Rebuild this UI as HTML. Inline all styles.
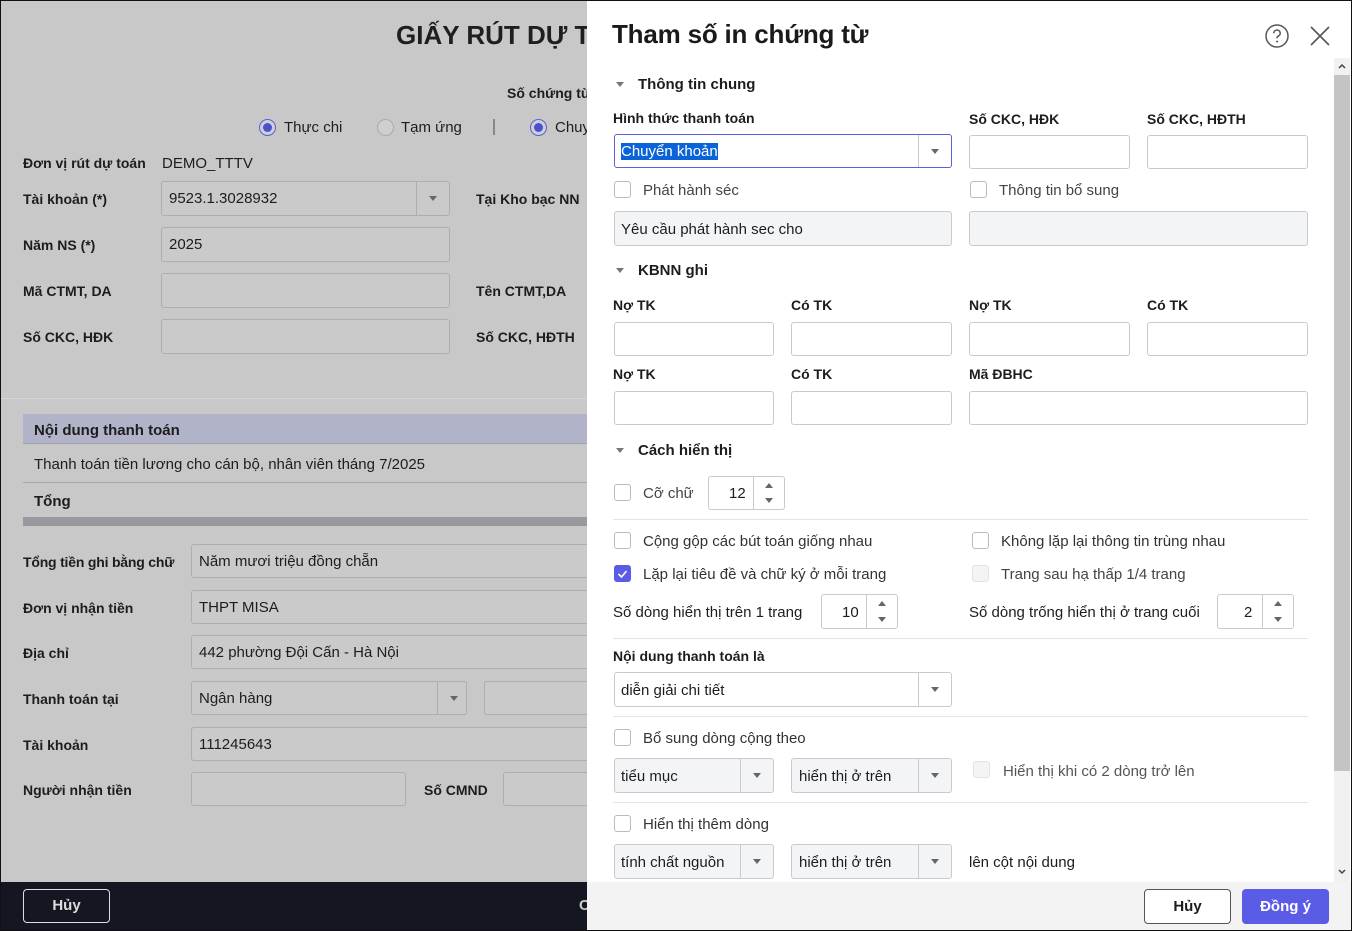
<!DOCTYPE html>
<html><head><meta charset="utf-8"><style>
*{box-sizing:border-box;margin:0;padding:0}
body{width:1352px;height:931px;overflow:hidden;position:relative;font-family:"Liberation Sans",sans-serif;font-size:14px;color:#1d1d1d;background:#c8c8c9}
.a{position:absolute;white-space:nowrap}
.b{font-weight:bold}
.li{position:absolute;border:1px solid #adaeb1;border-radius:3px;background:#cacacb}
.in{position:absolute;border:1px solid #c9cad0;border-radius:3px;background:#fff}
.g{background:#f3f4f6}
.dd{position:absolute;right:0;top:0;bottom:0;width:33px;border-left:1px solid #c9cad0}
.dd:after{content:"";position:absolute;left:12px;top:14px;border-left:4px solid transparent;border-right:4px solid transparent;border-top:5px solid #666}
.cb{position:absolute;width:17px;height:17px;border:1px solid #b9bac2;border-radius:3px;background:#fff}
.tri{position:absolute;border-left:4px solid transparent;border-right:4px solid transparent;border-top:5px solid #777}
.hr{position:absolute;left:613px;width:695px;height:1px;background:#e4e4e8}
.sp{position:absolute;border:1px solid #c9cad0;border-radius:3px;background:#fff}
.sp .s{position:absolute;right:0;top:0;bottom:0;width:31px;border-left:1px solid #c9cad0}
.sp .s:before{content:"";position:absolute;left:11px;top:6px;border-left:4px solid transparent;border-right:4px solid transparent;border-bottom:5px solid #666}
.sp .s:after{content:"";position:absolute;left:11px;bottom:6px;border-left:4px solid transparent;border-right:4px solid transparent;border-top:5px solid #666}
</style></head><body>
<div class="a" style="left:396px;top:20px;font-size:26px;font-weight:bold;color:#1f1f1f">GIẤY RÚT DỰ TOÁN</div>
<div class="a b" style="left:507px;top:85px">Số chứng từ</div>
<div class="a" style="left:259px;top:119px;width:17px;height:17px;border:1px solid #5b5fd6;border-radius:50%;background:#d0d0d4"><div style="margin:3px;width:9px;height:9px;border-radius:50%;background:#4b50d0"></div></div>
<div class="a" style="left:284px;top:119px;font-size:15px">Thực chi</div>
<div class="a" style="left:377px;top:119px;width:17px;height:17px;border:1px solid #aaa;border-radius:50%;background:#cfcfd0"></div>
<div class="a" style="left:401px;top:119px;font-size:15px">Tạm ứng</div>
<div class="a" style="left:493px;top:119px;width:2px;height:16px;background:#888"></div>
<div class="a" style="left:530px;top:119px;width:17px;height:17px;border:1px solid #5b5fd6;border-radius:50%;background:#d0d0d4"><div style="margin:3px;width:9px;height:9px;border-radius:50%;background:#4b50d0"></div></div>
<div class="a" style="left:555px;top:119px;font-size:15px">Chuyển khoản</div>
<div class="a b" style="left:23px;top:155px">Đơn vị rút dự toán</div>
<div class="a" style="left:162px;top:155px;font-size:15px">DEMO_TTTV</div>
<div class="a b" style="left:23px;top:191px">Tài khoản (*)</div>
<div class="li" style="left:161px;top:181px;width:289px;height:35px"><span class="a" style="left:7px;top:8px;font-size:15px">9523.1.3028932</span><div class="dd" style="border-color:#adaeb1"></div></div>
<div class="a b" style="left:476px;top:191px">Tại Kho bạc NN</div>
<div class="a b" style="left:23px;top:237px">Năm NS (*)</div>
<div class="li" style="left:161px;top:227px;width:289px;height:35px"><span class="a" style="left:7px;top:8px;font-size:15px">2025</span></div>
<div class="a b" style="left:23px;top:283px">Mã CTMT, DA</div>
<div class="li" style="left:161px;top:273px;width:289px;height:35px"></div>
<div class="a b" style="left:476px;top:283px">Tên CTMT,DA</div>
<div class="a b" style="left:23px;top:329px">Số CKC, HĐK</div>
<div class="li" style="left:161px;top:319px;width:289px;height:35px"></div>
<div class="a b" style="left:476px;top:329px">Số CKC, HĐTH</div>
<div class="a" style="left:0;top:398px;width:587px;height:1px;background:#d6d6d7"></div>
<div class="a" style="left:23px;top:414px;width:564px;height:30px;background:#b1b4c9;border-bottom:1px solid #a0a2b0"></div>
<div class="a b" style="left:34px;top:422px;font-size:15px">Nội dung thanh toán</div>
<div class="a" style="left:34px;top:456px;font-size:15px">Thanh toán tiền lương cho cán bộ, nhân viên tháng 7/2025</div>
<div class="a" style="left:23px;top:482px;width:564px;height:1px;background:#a8a8aa"></div>
<div class="a b" style="left:34px;top:493px;font-size:15px">Tổng</div>
<div class="a" style="left:23px;top:517px;width:564px;height:9px;background:#97999e"></div>
<div class="a b" style="left:23px;top:554px;letter-spacing:-0.2px">Tổng tiền ghi bằng chữ</div>
<div class="li" style="left:191px;top:544px;width:420px;height:34px"><span class="a" style="left:7px;top:8px;font-size:15px">Năm mươi triệu đồng chẵn</span></div>
<div class="a b" style="left:23px;top:600px">Đơn vị nhận tiền</div>
<div class="li" style="left:191px;top:590px;width:420px;height:34px"><span class="a" style="left:7px;top:8px;font-size:15px">THPT MISA</span></div>
<div class="a b" style="left:23px;top:645px">Địa chỉ</div>
<div class="li" style="left:191px;top:635px;width:420px;height:34px"><span class="a" style="left:7px;top:8px;font-size:15px">442 phường Đội Cấn - Hà Nội</span></div>
<div class="a b" style="left:23px;top:691px">Thanh toán tại</div>
<div class="li" style="left:191px;top:681px;width:276px;height:34px"><span class="a" style="left:7px;top:8px;font-size:15px">Ngân hàng</span><div class="dd" style="border-color:#adaeb1;width:29px"></div></div>
<div class="li" style="left:484px;top:681px;width:120px;height:34px"></div>
<div class="a b" style="left:23px;top:737px">Tài khoản</div>
<div class="li" style="left:191px;top:727px;width:420px;height:34px"><span class="a" style="left:7px;top:8px;font-size:15px">111245643</span></div>
<div class="a b" style="left:23px;top:782px">Người nhận tiền</div>
<div class="li" style="left:191px;top:772px;width:215px;height:34px"></div>
<div class="a b" style="left:424px;top:782px">Số CMND</div>
<div class="li" style="left:503px;top:772px;width:100px;height:34px"></div>
<div class="a" style="left:0;top:882px;width:590px;height:49px;background:#141722"></div>
<div class="a" style="left:23px;top:889px;width:87px;height:34px;border:1px solid #ddd;border-radius:4px;color:#ddd;font-weight:bold;font-size:15px;text-align:center;line-height:32px">Hủy</div>
<div class="a b" style="left:579px;top:897px;color:#ccc;font-size:15px">C</div>

<div class="a" style="left:587px;top:0;width:765px;height:931px;background:#fff"></div>
<div class="a" style="left:612px;top:19px;font-size:26px;font-weight:bold;color:#1a1a1a;letter-spacing:-0.2px">Tham số in chứng từ</div>
<svg class="a" style="left:1264px;top:23px" width="26" height="26" viewBox="0 0 26 26"><circle cx="13" cy="13" r="11" fill="none" stroke="#555" stroke-width="1.5"/><path d="M9.8 10.2a3.2 3.2 0 1 1 4.6 2.9c-1 .5-1.4 1.1-1.4 2.2" fill="none" stroke="#555" stroke-width="1.5"/><circle cx="13" cy="18.6" r="1" fill="#555"/></svg>
<svg class="a" style="left:1308px;top:24px" width="24" height="24" viewBox="0 0 24 24"><path d="M3 3L21 21M21 3L3 21" stroke="#555" stroke-width="1.6"/></svg>
<div class="a" style="left:1334px;top:58px;width:16px;height:824px;background:#f1f1f1"></div>
<div class="a" style="left:1334px;top:75px;width:16px;height:696px;background:#c4c4c4"></div>
<svg class="a" style="left:1337px;top:62px" width="10" height="8"><path d="M2 6L5 3L8 6" fill="none" stroke="#444" stroke-width="1.5"/></svg>
<svg class="a" style="left:1337px;top:868px" width="10" height="8"><path d="M2 2L5 5L8 2" fill="none" stroke="#444" stroke-width="1.5"/></svg>

<div class="tri" style="left:616px;top:82px"></div>
<div class="a b" style="left:638px;top:76px;font-size:15px">Thông tin chung</div>
<div class="a b" style="left:613px;top:110px">Hình thức thanh toán</div>
<div class="a b" style="left:969px;top:111px">Số CKC, HĐK</div>
<div class="a b" style="left:1147px;top:111px">Số CKC, HĐTH</div>
<div class="in" style="left:614px;top:134px;width:338px;height:34px;border-color:#5c60df"><span class="a" style="left:6px;top:8px;font-size:15px;background:#0a64d8;color:#fff">Chuyển khoản</span><div class="dd"></div></div>
<div class="in" style="left:969px;top:135px;width:161px;height:34px"></div>
<div class="in" style="left:1147px;top:135px;width:161px;height:34px"></div>
<div class="cb" style="left:614px;top:181px"></div>
<div class="a" style="left:643px;top:182px;color:#444;font-size:15px">Phát hành séc</div>
<div class="cb" style="left:970px;top:181px"></div>
<div class="a" style="left:999px;top:182px;color:#444;font-size:15px">Thông tin bổ sung</div>
<div class="in g" style="left:614px;top:211px;width:338px;height:35px"><span class="a" style="left:6px;top:9px;font-size:15px">Yêu cầu phát hành sec cho</span></div>
<div class="in g" style="left:969px;top:211px;width:339px;height:35px"></div>

<div class="tri" style="left:616px;top:268px"></div>
<div class="a b" style="left:638px;top:262px;font-size:15px">KBNN ghi</div>
<div class="a b" style="left:613px;top:297px">Nợ TK</div>
<div class="a b" style="left:791px;top:297px">Có TK</div>
<div class="a b" style="left:969px;top:297px">Nợ TK</div>
<div class="a b" style="left:1147px;top:297px">Có TK</div>
<div class="in" style="left:614px;top:322px;width:160px;height:34px"></div>
<div class="in" style="left:791px;top:322px;width:161px;height:34px"></div>
<div class="in" style="left:969px;top:322px;width:161px;height:34px"></div>
<div class="in" style="left:1147px;top:322px;width:161px;height:34px"></div>
<div class="a b" style="left:613px;top:366px">Nợ TK</div>
<div class="a b" style="left:791px;top:366px">Có TK</div>
<div class="a b" style="left:969px;top:366px">Mã ĐBHC</div>
<div class="in" style="left:614px;top:391px;width:160px;height:34px"></div>
<div class="in" style="left:791px;top:391px;width:161px;height:34px"></div>
<div class="in" style="left:969px;top:391px;width:339px;height:34px"></div>

<div class="tri" style="left:616px;top:448px"></div>
<div class="a b" style="left:638px;top:442px;font-size:15px">Cách hiển thị</div>
<div class="cb" style="left:614px;top:484px"></div>
<div class="a" style="left:643px;top:485px;color:#444;font-size:15px">Cỡ chữ</div>
<div class="sp g" style="left:708px;top:476px;width:77px;height:34px"><span class="a" style="left:20px;top:8px;font-size:15px">12</span><div class="s"></div></div>
<div class="hr" style="top:519px"></div>
<div class="cb" style="left:614px;top:532px"></div>
<div class="a" style="left:643px;top:533px;color:#333;font-size:15px">Cộng gộp các bút toán giống nhau</div>
<div class="cb" style="left:972px;top:532px"></div>
<div class="a" style="left:1001px;top:533px;color:#333;font-size:15px">Không lặp lại thông tin trùng nhau</div>
<div class="cb" style="left:614px;top:565px;background:#5b5ce6;border-color:#5b5ce6"><svg width="15" height="15" style="position:absolute;left:0;top:0"><path d="M3.5 8l3 3 5-6" fill="none" stroke="#fff" stroke-width="1.6"/></svg></div>
<div class="a" style="left:643px;top:566px;color:#333;font-size:15px">Lặp lại tiêu đề và chữ ký ở mỗi trang</div>
<div class="cb" style="left:972px;top:565px;background:#f3f4f6;border-color:#e2e3e6"></div>
<div class="a" style="left:1001px;top:566px;color:#444;font-size:15px">Trang sau hạ thấp 1/4 trang</div>
<div class="a" style="left:613px;top:604px;font-size:15px">Số dòng hiển thị trên 1 trang</div>
<div class="sp" style="left:821px;top:594px;width:77px;height:35px"><span class="a" style="left:20px;top:9px;font-size:15px">10</span><div class="s"></div></div>
<div class="a" style="left:969px;top:604px;font-size:15px">Số dòng trống hiển thị ở trang cuối</div>
<div class="sp" style="left:1217px;top:594px;width:77px;height:35px"><span class="a" style="left:26px;top:9px;font-size:15px">2</span><div class="s"></div></div>
<div class="hr" style="top:638px"></div>
<div class="a b" style="left:613px;top:648px">Nội dung thanh toán là</div>
<div class="in" style="left:614px;top:672px;width:338px;height:35px"><span class="a" style="left:6px;top:9px;font-size:15px">diễn giải chi tiết</span><div class="dd"></div></div>
<div class="hr" style="top:716px"></div>
<div class="cb" style="left:614px;top:729px"></div>
<div class="a" style="left:643px;top:730px;color:#333;font-size:15px">Bổ sung dòng cộng theo</div>
<div class="in g" style="left:614px;top:758px;width:160px;height:35px"><span class="a" style="left:6px;top:9px;font-size:15px">tiểu mục</span><div class="dd"></div></div>
<div class="in g" style="left:791px;top:758px;width:161px;height:35px"><span class="a" style="left:7px;top:9px;font-size:15px">hiển thị ở trên</span><div class="dd"></div></div>
<div class="cb" style="left:973px;top:761px;background:#f3f4f6;border-color:#e2e3e6"></div>
<div class="a" style="left:1003px;top:763px;color:#555;font-size:15px">Hiển thị khi có 2 dòng trở lên</div>
<div class="hr" style="top:802px"></div>
<div class="cb" style="left:614px;top:815px"></div>
<div class="a" style="left:643px;top:816px;color:#333;font-size:15px">Hiển thị thêm dòng</div>
<div class="in g" style="left:614px;top:844px;width:160px;height:35px"><span class="a" style="left:6px;top:9px;font-size:15px">tính chất nguồn</span><div class="dd"></div></div>
<div class="in g" style="left:791px;top:844px;width:161px;height:35px"><span class="a" style="left:7px;top:9px;font-size:15px">hiển thị ở trên</span><div class="dd"></div></div>
<div class="a" style="left:969px;top:854px;font-size:15px">lên cột nội dung</div>

<div class="a" style="left:587px;top:882px;width:765px;height:49px;background:#f3f3f3"></div>
<div class="a" style="left:1144px;top:889px;width:87px;height:35px;border:1px solid #555;border-radius:4px;background:#fff;font-weight:bold;font-size:15px;text-align:center;line-height:33px">Hủy</div>
<div class="a" style="left:1242px;top:889px;width:87px;height:35px;border-radius:4px;background:#5b5ce6;color:#fff;font-weight:bold;font-size:15px;text-align:center;line-height:35px">Đồng ý</div>
<div class="a" style="left:0;top:0;width:1352px;height:931px;border:1px solid #111;pointer-events:none"></div>
</body></html>
